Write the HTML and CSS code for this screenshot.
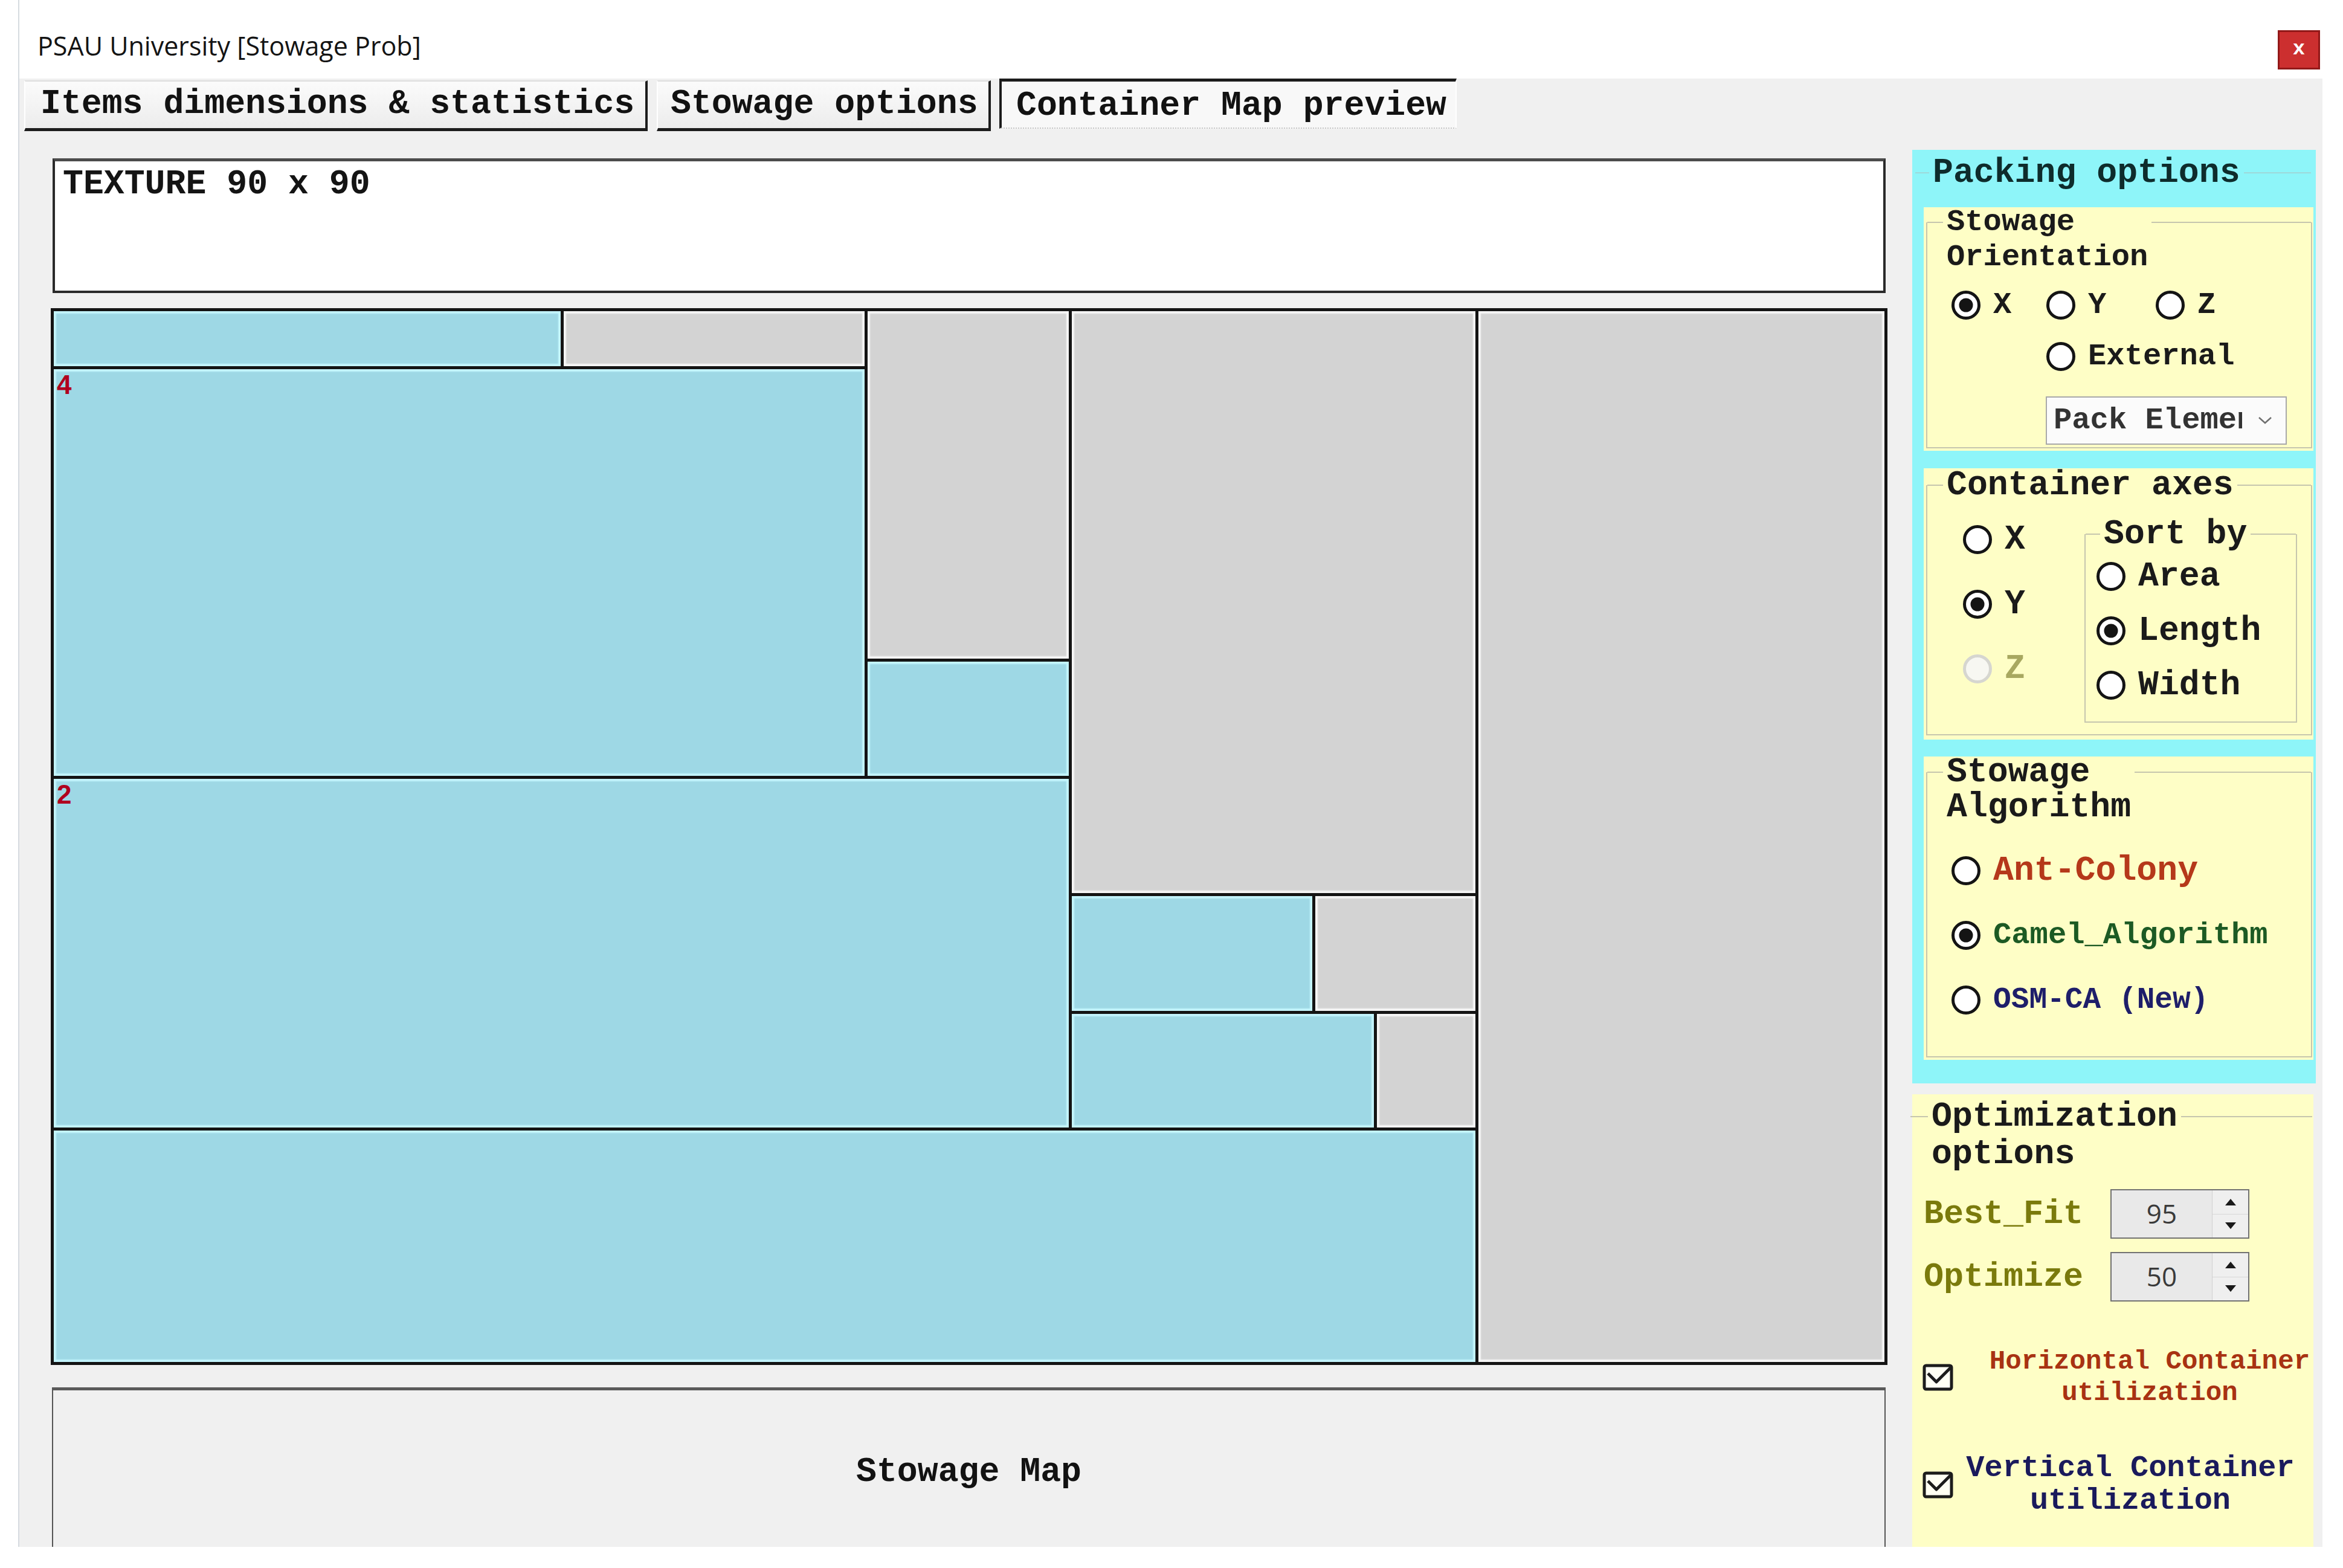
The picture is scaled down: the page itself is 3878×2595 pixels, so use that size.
FILE: index.html
```html
<!DOCTYPE html>
<html>
<head>
<meta charset="utf-8">
<title>PSAU University [Stowage Prob]</title>
<link rel="stylesheet" href="styles.css">
</head>
<body>
<div class="window">
  <div class="titlebar">
    <div class="title">PSAU University [Stowage Prob]</div>
    <div class="close">x</div>
  </div>
  <div class="client">
    <div class="tabs">
      <div class="tab tab1">Items dimensions &amp; statistics</div>
      <div class="tab tab2">Stowage options</div>
      <div class="tab tab3">Container Map preview</div>
    </div>
    <div class="content">
      <div class="left">
        <div class="texture">TEXTURE 90 x 90</div>
        <div class="map">
          <div class="cell blue" style="left:5px;top:5px;width:839px;height:91px"></div>
          <div class="cell grey" style="left:849px;top:5px;width:498px;height:91px"></div>
          <div class="cell blue" style="left:5px;top:101px;width:1342px;height:673px"><span class="cell-label">4</span></div>
          <div class="cell grey" style="left:1352px;top:5px;width:333px;height:575px"></div>
          <div class="cell blue" style="left:1352px;top:585px;width:333px;height:189px"></div>
          <div class="cell blue" style="left:5px;top:779px;width:1680px;height:577px"><span class="cell-label">2</span></div>
          <div class="cell grey" style="left:1690px;top:5px;width:668px;height:963px"></div>
          <div class="cell blue" style="left:1690px;top:973px;width:398px;height:190px"></div>
          <div class="cell grey" style="left:2093px;top:973px;width:265px;height:190px"></div>
          <div class="cell blue" style="left:1690px;top:1168px;width:500px;height:188px"></div>
          <div class="cell grey" style="left:2195px;top:1168px;width:163px;height:188px"></div>
          <div class="cell blue" style="left:5px;top:1361px;width:2353px;height:383px"></div>
          <div class="cell grey" style="left:2363px;top:5px;width:672px;height:1739px"></div>
        </div>
        <div class="stowmap">Stowage Map</div>
      </div>

      <div class="right">
        <div class="panel">
          <div class="panel-title"><span class="pseg-l"></span><span class="ptext">Packing options</span><span class="pseg-r"></span></div>

          <div class="group g-orient">
            <div class="frame">
              <div class="legrow"><span class="lseg"></span><span class="legend">Stowage<br>Orientation</span><span class="rseg"></span></div>
              <div class="orient-grid">
                <div class="opt"><svg class="radio" viewBox="0 0 50 50"><circle class="ring" cx="25" cy="25" r="21.5"/><circle class="dot" cx="25" cy="25" r="11.5"/></svg><span>X</span></div>
                <div class="opt"><svg class="radio" viewBox="0 0 50 50"><circle class="ring" cx="25" cy="25" r="21.5"/></svg><span>Y</span></div>
                <div class="opt"><svg class="radio" viewBox="0 0 50 50"><circle class="ring" cx="25" cy="25" r="21.5"/></svg><span>Z</span></div>
                <div class="opt span2"><svg class="radio" viewBox="0 0 50 50"><circle class="ring" cx="25" cy="25" r="21.5"/></svg><span>External</span></div>
                <div class="dropdown span2">
                  <span class="dd-text">Pack Elements</span>
                  <svg class="chev" viewBox="0 0 24 14"><polyline points="2,2 12,11 22,2"/></svg>
                </div>
              </div>
            </div>
          </div>

          <div class="group g-axes">
            <div class="frame">
              <div class="legrow"><span class="lseg"></span><span class="legend">Container axes</span><span class="rseg"></span></div>
              <div class="axes-body">
                <div class="axes-col">
                  <div class="opt"><svg class="radio" viewBox="0 0 50 50"><circle class="ring" cx="25" cy="25" r="21.5"/></svg><span>X</span></div>
                  <div class="opt"><svg class="radio" viewBox="0 0 50 50"><circle class="ring" cx="25" cy="25" r="21.5"/><circle class="dot" cx="25" cy="25" r="11.5"/></svg><span>Y</span></div>
                  <div class="opt disabled"><svg class="radio" viewBox="0 0 50 50"><circle class="ring" cx="25" cy="25" r="21.5"/></svg><span>Z</span></div>
                </div>
                <div class="sortbox">
                  <div class="legrow"><span class="lseg"></span><span class="legend">Sort by</span><span class="rseg"></span></div>
                  <div class="sort-opts">
                    <div class="opt"><svg class="radio" viewBox="0 0 50 50"><circle class="ring" cx="25" cy="25" r="21.5"/></svg><span>Area</span></div>
                    <div class="opt"><svg class="radio" viewBox="0 0 50 50"><circle class="ring" cx="25" cy="25" r="21.5"/><circle class="dot" cx="25" cy="25" r="11.5"/></svg><span>Length</span></div>
                    <div class="opt"><svg class="radio" viewBox="0 0 50 50"><circle class="ring" cx="25" cy="25" r="21.5"/></svg><span>Width</span></div>
                  </div>
                </div>
              </div>
            </div>
          </div>

          <div class="group g-algo">
            <div class="frame">
              <div class="legrow"><span class="lseg"></span><span class="legend">Stowage<br>Algorithm</span><span class="rseg"></span></div>
              <div class="algo-opts">
                <div class="opt"><svg class="radio" viewBox="0 0 50 50"><circle class="ring" cx="25" cy="25" r="21.5"/></svg><span class="c-ant">Ant-Colony</span></div>
                <div class="opt"><svg class="radio" viewBox="0 0 50 50"><circle class="ring" cx="25" cy="25" r="21.5"/><circle class="dot" cx="25" cy="25" r="11.5"/></svg><span class="c-camel">Camel_Algorithm</span></div>
                <div class="opt"><svg class="radio" viewBox="0 0 50 50"><circle class="ring" cx="25" cy="25" r="21.5"/></svg><span class="c-osm">OSM-CA (New)</span></div>
              </div>
            </div>
          </div>
        </div>

        <div class="optgroup">
          <div class="opt-frame">
            <div class="legrow"><span class="lseg"></span><span class="legend">Optimization<br>options</span><span class="rseg"></span></div>
          </div>
          <div class="spin-grid">
            <span class="spin-label">Best_Fit</span>
            <div class="spin"><span class="spin-val">95</span><span class="spin-btns"><span class="up"></span><span class="down"></span></span></div>
            <span class="spin-label">Optimize</span>
            <div class="spin"><span class="spin-val">50</span><span class="spin-btns"><span class="up"></span><span class="down"></span></span></div>
          </div>
          <div class="chk-row chk-h">
            <svg class="chk" viewBox="0 0 52 46"><rect x="3" y="4" width="45" height="39" rx="3"/><polyline points="9,17 23,31 47,7"/></svg>
            <span class="chk-label">Horizontal Container<br>utilization</span>
          </div>
          <div class="chk-row chk-v">
            <svg class="chk" viewBox="0 0 52 46"><rect x="3" y="4" width="45" height="39" rx="3"/><polyline points="9,17 23,31 47,7"/></svg>
            <span class="chk-label">Vertical Container<br>utilization</span>
          </div>
        </div>
      </div>
    </div>
  </div>
</div>
</body>
</html>
```

FILE: styles.css
```css
* { box-sizing: border-box; }

html, body {
  margin: 0;
  padding: 0;
}

body {
  width: 3878px;
  height: 2595px;
  overflow: hidden;
  background: #ffffff;
  font-family: "Liberation Mono", "Courier New", monospace;
  font-weight: bold;
  color: #1a1a1a;
}

.window {
  margin-left: 30px;
  width: 3814px;
  border-left: 2px solid #d6dbe0;
}

/* ---------- title bar ---------- */
.titlebar {
  height: 130px;
  display: flex;
  justify-content: space-between;
  align-items: flex-start;
  background: #ffffff;
}

.title {
  font-family: "Open Sans", "Noto Sans", sans-serif;
  font-weight: 500;
  font-size: 43px;
  line-height: 56px;
  color: #141414;
  padding: 48px 0 0 30px;
  white-space: nowrap;
}

.close {
  margin: 50px 4px 0 0;
  width: 70px;
  height: 65px;
  background: #cc2f2f;
  border: 3px solid #921818;
  color: #ffffff;
  font-family: "Liberation Mono", monospace;
  font-weight: bold;
  font-size: 34px;
  line-height: 56px;
  text-align: center;
}

/* ---------- client ---------- */
.client {
  height: 2430px;
  background: #f0f0f0;
  overflow: hidden;
}

.tabs {
  display: flex;
  align-items: flex-start;
  height: 87px;
  padding-left: 8px;
}

.tab {
  font-size: 56.5px;
  line-height: 64px;
  color: #121212;
  white-space: nowrap;
  background: linear-gradient(#fbfbfb, #ececec);
}

.tab1, .tab2 {
  margin-top: 3px;
  height: 84px;
  border-top: 2px solid #dedede;
  border-left: 2px solid #ffffff;
  border-right: 4px solid #1c1c1c;
  border-bottom: 5px solid #1c1c1c;
  padding: 5px 0 0 25px;
}

.tab1 { width: 1032px; }
.tab2 { width: 553px; margin-left: 15px; padding-left: 21px; }

.tab3 {
  width: 757px;
  height: 83px;
  margin-left: 14px;
  border-top: 5px solid #1c1c1c;
  border-left: 4px solid #1c1c1c;
  border-right: 2px solid #ffffff;
  border-bottom: 2px dotted #c8c8c8;
  padding: 8px 0 0 24px;
  background: #f8f8f8;
}

.content {
  display: flex;
  gap: 41px;
  padding-left: 52px;
  margin-top: 31px;
}

.left {
  width: 3040px;
  flex: none;
}

.right {
  width: 668px;
  flex: none;
}

/* ---------- left column ---------- */
.texture {
  margin: 14px 3px 0 3px;
  height: 223px;
  background: #ffffff;
  border: 4px solid #2a2a2a;
  border-top: 5px solid #4c4c4c;
  padding: 6px 0 0 13px;
  font-size: 56.5px;
  line-height: 64px;
  color: #141414;
}

.map {
  position: relative;
  margin-top: 25px;
  width: 3040px;
  height: 1749px;
  background: #141414;
}

.cell {
  position: absolute;
}

.cell.blue {
  background: #9ed8e5;
  box-shadow: inset 0 0 2px 4px #c4f5fd;
}

.cell.grey {
  background: #d3d3d3;
  box-shadow: inset 0 0 2px 4px #f6f6f6;
}

.cell-label {
  display: block;
  padding: 4px 0 0 5px;
  font-family: "Liberation Sans", Arial, sans-serif;
  font-weight: 700;
  font-size: 44px;
  line-height: 44px;
  color: #b0001e;
}

.stowmap {
  margin: 37px 3px 0 2px;
  height: 274px;
  background: #f0f0f0;
  border-top: 5px solid #5a5a5a;
  border-left: 2px solid #555555;
  border-right: 2px solid #555555;
  display: flex;
  align-items: center;
  justify-content: center;
  font-size: 56.5px;
  line-height: 64px;
  color: #121212;
}

/* ---------- right panel ---------- */
.panel {
  height: 1545px;
  background: #8ef5f9;
  padding: 0 4px 0 19px;
}

.panel-title {
  display: flex;
  align-items: center;
  height: 95px;
  padding-bottom: 20px;
  margin-left: -14px;
}

.pseg-l, .pseg-r {
  height: 2px;
  background: #9ed8da;
}

.pseg-l { width: 23px; }
.pseg-r { flex: 1; margin-right: 4px; }

.ptext {
  padding: 0 6px;
  font-size: 56.5px;
  line-height: 64px;
  color: #0e2c2c;
  white-space: nowrap;
}

.group {
  background: #fefec6;
  display: flex;
  flex-direction: column;
}

.frame {
  flex: 1;
  border: 2px solid #c6c6ae;
  border-top: none;
}

.legrow {
  display: flex;
  align-items: flex-start;
  margin-top: calc(var(--lh) / -2);
}

.lseg, .rseg {
  height: 2px;
  background: #c6c6ae;
  margin-top: calc(var(--lh) / 2 - 1px);
}

.lseg { width: 26px; flex: none; }
.rseg { flex: 1; }

.legend {
  padding: 0 6px;
  line-height: var(--lh);
  white-space: nowrap;
  color: #1a1a1a;
}

.g-orient {
  height: 403px;
  padding: 25px 2px 4px 4px;
  --lh: 58px;
  font-size: 50.5px;
}

.g-axes {
  margin-top: 29px;
  height: 449px;
  padding: 28px 2px 7px 4px;
  --lh: 60px;
  font-size: 56.5px;
}

.g-algo {
  margin-top: 28px;
  height: 502px;
  padding: 26px 2px 4px 4px;
  --lh: 58px;
  font-size: 56.5px;
}

.opt {
  display: flex;
  align-items: center;
  gap: 20px;
  height: 60px;
  line-height: 60px;
  white-space: nowrap;
}

.radio {
  width: 50px;
  height: 50px;
  flex: none;
}

.radio .ring {
  fill: #ffffff;
  stroke: #141414;
  stroke-width: 5;
}

.radio .dot {
  fill: #141414;
}

.opt.disabled .ring {
  fill: #f7f7f2;
  stroke: #d6d6d0;
}

.opt.disabled span {
  color: #a8a860;
}

.orient-grid {
  display: grid;
  grid-template-columns: 157px 181px 1fr;
  row-gap: 25px;
  padding-left: 39px;
  margin-top: 20px;
}

.span2 {
  grid-column: 2 / span 2;
}

.dropdown {
  margin-top: 11px;
  width: 399px;
  height: 80px;
  border: 2px solid #a9a9a9;
  background: #fbfbfb;
  display: flex;
  align-items: center;
}

.dd-text {
  width: 323px;
  flex: none;
  overflow: hidden;
  white-space: nowrap;
  padding-left: 11px;
  font-size: 50.5px;
  line-height: 60px;
  color: #333333;
}

.chev {
  width: 24px;
  height: 14px;
  margin-left: auto;
  margin-right: 22px;
}

.chev polyline {
  fill: none;
  stroke: #707070;
  stroke-width: 2.5;
}

.axes-body {
  display: flex;
}

.axes-col {
  width: 260px;
  flex: none;
  padding: 30px 0 0 58px;
  display: flex;
  flex-direction: column;
  gap: 47px;
}

.sortbox {
  margin-top: 51px;
  width: 352px;
  height: 312px;
  border: 2px solid #c6c6ae;
  border-top: none;
}

.sortbox .lseg { width: 24px; }

.sort-opts {
  padding-left: 17px;
  margin-top: 10px;
  display: flex;
  flex-direction: column;
  gap: 30px;
}

.algo-opts {
  padding-left: 39px;
  margin-top: 46px;
  display: flex;
  flex-direction: column;
  gap: 47px;
}

.c-ant { color: #b5381a; }
.c-camel { color: #1c5a24; font-size: 50.5px; }
.c-osm { color: #1e1e6a; font-size: 49.5px; }

/* ---------- optimization group ---------- */
.optgroup {
  margin-top: 18px;
  width: 664px;
  height: 800px;
  background: #fefec6;
  padding-top: 37px;
  --lh: 62px;
  font-size: 56.5px;
}

.opt-frame {
  margin: 0 2px 0 -3px;
}

.opt-frame .lseg { width: 29px; }

.spin-grid {
  display: grid;
  grid-template-columns: 309px 230px;
  grid-auto-rows: 82px;
  row-gap: 22px;
  align-items: center;
  margin-top: 27px;
  padding-left: 19px;
}

.spin-label {
  color: #7a7a0c;
  font-size: 55px;
  white-space: nowrap;
}

.spin {
  height: 82px;
  width: 230px;
  border: 2px solid #727272;
  background: #e9e9e9;
  display: flex;
}

.spin-val {
  width: 166px;
  flex: none;
  text-align: center;
  font-family: "Open Sans", "Noto Sans", sans-serif;
  font-weight: 400;
  font-size: 44px;
  line-height: 76px;
  color: #3a3a3a;
}

.spin-btns {
  flex: 1;
  display: flex;
  flex-direction: column;
  border-left: 1px solid #d0d0d0;
  background: #efefef;
}

.spin-btns span {
  flex: 1;
  display: flex;
  align-items: center;
  justify-content: center;
}

.spin-btns .up { border-bottom: 1px solid #d8d8d8; }

.spin-btns .up::before {
  content: "";
  border-left: 9px solid transparent;
  border-right: 9px solid transparent;
  border-bottom: 11px solid #1a1a1a;
}

.spin-btns .down::before {
  content: "";
  border-left: 9px solid transparent;
  border-right: 9px solid transparent;
  border-top: 11px solid #1a1a1a;
}

.chk-row {
  display: flex;
  align-items: center;
  padding-left: 17px;
}

.chk {
  width: 52px;
  height: 46px;
  flex: none;
}

.chk rect {
  fill: #fffff4;
  stroke: #1c1c1c;
  stroke-width: 5;
}

.chk polyline {
  fill: none;
  stroke: #1c1c1c;
  stroke-width: 5;
  stroke-linejoin: round;
}

.chk-label {
  text-align: center;
  white-space: nowrap;
}

.chk-h {
  margin-top: 73px;
}

.chk-h .chk-label {
  margin-left: 57px;
  width: 534px;
  font-size: 44.2px;
  line-height: 52px;
  color: #a83212;
}

.chk-v {
  margin-top: 72px;
}

.chk-v .chk-label {
  margin-left: 12px;
  width: 560px;
  font-size: 50.3px;
  line-height: 54px;
  color: #1a1a5c;
}
```
